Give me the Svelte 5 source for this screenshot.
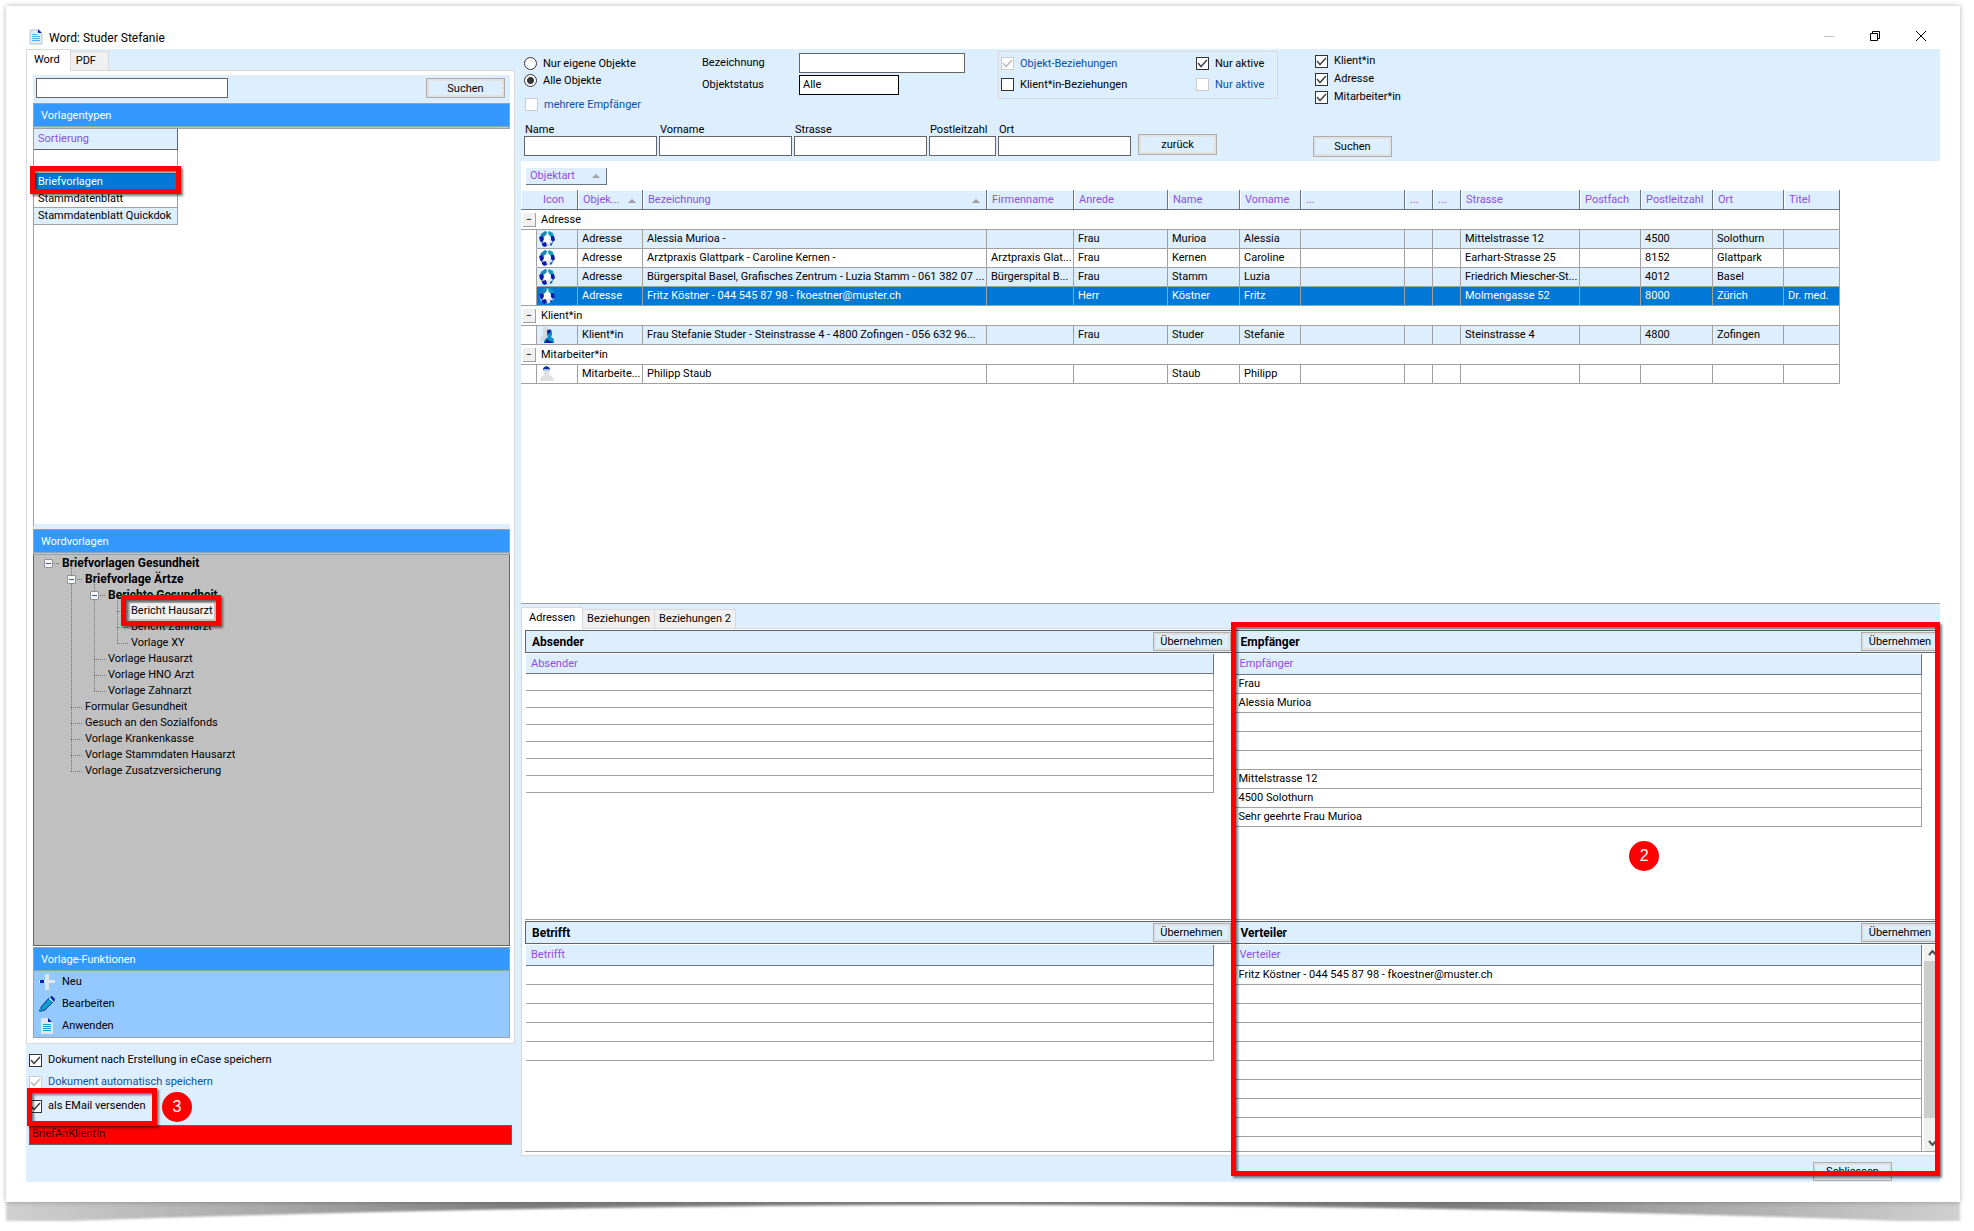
<script>
	let types = ['Briefvorlagen', 'Stammdatenblatt', 'Stammdatenblatt Quickdok'];

	let tree = {
		label: 'Briefvorlagen Gesundheit',
		children: [
			{
				label: 'Briefvorlage Ärtze',
				children: [
					{
						label: 'Berichte Gesundheit',
						children: [
							{ label: 'Bericht Hausarzt', selected: true },
							{ label: 'Bericht Zahnarzt' },
							{ label: 'Vorlage XY' }
						]
					},
					{ label: 'Vorlage Hausarzt' },
					{ label: 'Vorlage HNO Arzt' },
					{ label: 'Vorlage Zahnarzt' }
				]
			},
			{ label: 'Formular Gesundheit' },
			{ label: 'Gesuch an den Sozialfonds' },
			{ label: 'Vorlage Krankenkasse' },
			{ label: 'Vorlage Stammdaten Hausarzt' },
			{ label: 'Vorlage Zusatzversicherung' }
		]
	};

	let searchFields = [
		{ id: 'name', label: 'Name' },
		{ id: 'vorname', label: 'Vorname' },
		{ id: 'strasse', label: 'Strasse' },
		{ id: 'plz', label: 'Postleitzahl', short: true },
		{ id: 'ort', label: 'Ort' }
	];

	let columns = [
		{ label: 'Objek...', width: 65, sort: true },
		{ label: 'Bezeichnung', width: 344, sort: true },
		{ label: 'Firmenname', width: 87 },
		{ label: 'Anrede', width: 94 },
		{ label: 'Name', width: 72 },
		{ label: 'Vorname', width: 61 },
		{ label: '...', width: 104 },
		{ label: '...', width: 28 },
		{ label: '...', width: 28 },
		{ label: 'Strasse', width: 119 },
		{ label: 'Postfach', width: 61 },
		{ label: 'Postleitzahl', width: 72 },
		{ label: 'Ort', width: 71 },
		{ label: 'Titel', width: 56 }
	];

	let groups = [
		{
			name: 'Adresse',
			icon: 'globe',
			rows: [
				{ cells: ['Adresse', 'Alessia Murioa -', '', 'Frau', 'Murioa', 'Alessia', '', '', '', 'Mittelstrasse 12', '', '4500', 'Solothurn', ''] },
				{ cells: ['Adresse', 'Arztpraxis Glattpark - Caroline Kernen -', 'Arztpraxis Glat...', 'Frau', 'Kernen', 'Caroline', '', '', '', 'Earhart-Strasse 25', '', '8152', 'Glattpark', ''] },
				{ cells: ['Adresse', 'Bürgerspital Basel, Grafisches Zentrum - Luzia Stamm - 061 382 07 ...', 'Bürgerspital B...', 'Frau', 'Stamm', 'Luzia', '', '', '', 'Friedrich Miescher-St...', '', '4012', 'Basel', ''] },
				{ selected: true, cells: ['Adresse', 'Fritz Köstner - 044 545 87 98 - fkoestner@muster.ch', '', 'Herr', 'Köstner', 'Fritz', '', '', '', 'Molmengasse 52', '', '8000', 'Zürich', 'Dr. med.'] }
			]
		},
		{
			name: 'Klient*in',
			icon: 'client',
			rows: [
				{ cells: ['Klient*in', 'Frau Stefanie Studer - Steinstrasse 4 - 4800 Zofingen - 056 632 96...', '', 'Frau', 'Studer', 'Stefanie', '', '', '', 'Steinstrasse 4', '', '4800', 'Zofingen', ''] }
			]
		},
		{
			name: 'Mitarbeiter*in',
			icon: 'staff',
			plain: true,
			rows: [
				{ cells: ['Mitarbeite...', 'Philipp Staub', '', '', 'Staub', 'Philipp', '', '', '', '', '', '', '', ''] }
			]
		}
	];

	let empty = (n) => Array(n).fill('');
	let recipient = ['Frau', 'Alessia Murioa', '', '', '', 'Mittelstrasse 12', '4500 Solothurn', 'Sehr geehrte Frau Murioa'];
	let distribution = ['Fritz Köstner - 044 545 87 98 - fkoestner@muster.ch', ...empty(9)];
</script>

{#snippet docIcon()}
	<svg width="14" height="16" viewBox="0 0 14 16" aria-hidden="true">
		<path d="M1 1h8l4 4v10H1z" fill="#e3eaf2" stroke="#b9c3cf" />
		<path d="M9 0l4 4H9z" fill="#0a2aa8" />
		<path d="M3 5.500h5M3 7.500h8M3 9.500h8M3 11.500h8" stroke="#4fb2ee" />
	</svg>
{/snippet}

{#snippet rowIcon(kind)}
	<svg width="16" height="16" viewBox="0 0 16 16" aria-hidden="true">
		{#if kind === 'globe'}
			<circle cx="8" cy="8" r="7.500" fill="#dfe3e7" />
			<path d="M6 5l3-1 2 2 0 4-3 2-3-2z" fill="#fff" />
			<path d="M2 3l4-3 2 1-1 3-3 2-3 0z" fill="#1487b8" />
			<path d="M10 0l4 2 1 4-3 0-2-2-1-2z" fill="#0a9cc4" />
			<path d="M0 6l4-1 1 3-2 4-2-2z" fill="#0a1fae" />
			<path d="M12 5l3 0 1 4-2 2-2-2zM3 12l4-1 1 4-3 1-2-2z" fill="#0a1fae" />
			<path d="M11 13l3-2-1 3-2 1z" fill="#0a5ac0" />
		{:else if kind === 'client'}
			<path d="M4 2c0-3 5-3 5 0v4l2 3v5H1c0-3 1-4 3-5z" fill="#d5d8db" />
			<path d="M8 5c0-3 5-3 5 0v3l-1 2c3 1 3 3 3 6H5c0-3 1-4 4-6l-1-2z" fill="#0a94c0" />
			<path d="M8 5c0-3 4-3 4-1l-1 2-2 1zM5 16l3-4 3 2 4 2z" fill="#0a1fae" />
		{:else}
			<path d="M4 4c0-4 7-4 7 0l-1 5c3 1 5 3 5 6H1c0-3 1-5 4-6z" fill="#dfe1e3" />
			<path d="M4 4c0-5 7-5 7 0l-2-1H6z" fill="#0a2aa8" />
			<path d="M6 3h3v2H6z" fill="#7ad0ee" />
		{/if}
	</svg>
{/snippet}

{#snippet check(id, label, checked, disabled)}
	<label class="check" class:disabled for={id}>
		<input type="checkbox" {id} {checked} {disabled} />
		<span>{label}</span>
	</label>
{/snippet}

{#snippet node(item)}
	<li>
		<div class="node">
			{#if item.children}
				<button class="toggle" aria-label="Zuklappen"></button>
			{/if}
			<span class="label" class:bold={item.children} class:selected={item.selected}>
				{item.label}
				{#if item.selected}<i class="frame frame-node"></i>{/if}
			</span>
		</div>
		{#if item.children}
			<ul>
				{#each item.children as child}
					{@render node(child)}
				{/each}
			</ul>
		{/if}
	</li>
{/snippet}

{#snippet panel(title, rows, dense, scroll)}
	<section class="panel">
		<header>
			<h2>{title}</h2>
			<button class="btn small">Übernehmen</button>
		</header>
		<div class="panel-body">
			<table class="lines" class:dense>
				<thead><tr><th>{title}</th></tr></thead>
				<tbody>
					{#each rows as row}
						<tr><td>{row}</td></tr>
					{/each}
				</tbody>
			</table>
			{#if scroll}
				<div class="scrollbar">
					<svg width="9" height="6" viewBox="0 0 9 6"><path d="M1 5l3.500-4 3.500 4" fill="none" stroke="#505050" stroke-width="2" /></svg>
					<div class="thumb"></div>
					<svg width="9" height="6" viewBox="0 0 9 6"><path d="M1 1l3.500 4 3.500-4" fill="none" stroke="#505050" stroke-width="2" /></svg>
				</div>
			{/if}
		</div>
	</section>
{/snippet}

<div class="page">
	<div class="sheet">
		<div class="titlebar">
			{@render docIcon()}
			<h1>Word: Studer Stefanie</h1>
			<div class="window-buttons">
				<button aria-label="Minimieren">
					<svg width="10" height="10"><path d="M0 5.500h10" stroke="#c4c4c4" /></svg>
				</button>
				<button aria-label="Verkleinern">
					<svg width="10" height="10" fill="none" stroke="#000"><path d="M0.500 2.500h7v7h-7zM2.500 2.500v-2h7v7h-2" /></svg>
				</button>
				<button aria-label="Schliessen">
					<svg width="10" height="10"><path d="M0 0l10 10M10 0l-10 10" stroke="#000" /></svg>
				</button>
			</div>
		</div>

		<div class="window">
			<aside>
				<div class="tabs">
					<button class="tab active">Word</button>
					<button class="tab">PDF</button>
				</div>
				<div class="tab-page">
					<div class="search">
						<input type="text" aria-label="Vorlage suchen" />
						<button class="btn">Suchen</button>
					</div>
					<div class="bar double">Vorlagentypen</div>
					<div class="types">
						<table>
							<thead><tr><th>Sortierung</th></tr></thead>
							<tbody>
								<tr class="blank"><td></td></tr>
								{#each types as type, i}
									<tr class:selected={i === 0} class:alt={i === 2}>
										<td>{type}{#if i === 0}<i class="frame frame-type"></i>{/if}</td>
									</tr>
								{/each}
							</tbody>
						</table>
					</div>
					<div class="bar double">Wordvorlagen</div>
					<div class="tree">
						<ul class="root">{@render node(tree)}</ul>
					</div>
					<div class="bar">Vorlage-Funktionen</div>
					<div class="actions">
						<button>
							<svg width="16" height="16" viewBox="0 0 16 16"><path d="M6 0h4v6h6v3h-6v7H6V9H0V6h6z" fill="#dfe6ee" /><path d="M1 6h4v3H1z" fill="#0a1fae" /></svg>
							Neu
						</button>
						<button>
							<svg width="16" height="16" viewBox="0 0 16 16"><path d="M2 11l8-9 4 4-8 8-4 1z" fill="#0aa0cc" stroke="#0a2aa8" /><path d="M11 1l2-1 3 3-1 3z" fill="#0a1fae" /><path d="M10 2l4 4" stroke="#fff" /><path d="M0 13h3v3H0z" fill="#0a8fc0" /></svg>
							Bearbeiten
						</button>
						<button>
							<svg width="16" height="16" viewBox="0 0 16 16"><path d="M2 0h7l5 5v11H2z" fill="#e2e6ea" /><path d="M9 0l4 4H9z" fill="#0a1fae" /><path d="M4 6.500h8M4 8.500h8M4 10.500h8M4 12.500h8" stroke="#1aa3c8" /></svg>
							Anwenden
						</button>
					</div>
				</div>
				<div class="options">
					{@render check('opt-save', 'Dokument nach Erstellung in eCase speichern', true, false)}
					{@render check('opt-auto', 'Dokument automatisch speichern', true, true)}
					<div class="mail">
						{@render check('opt-mail', 'als EMail versenden', true, false)}
						<i class="frame frame-mail"></i>
						<b class="step step-mail">3</b>
					</div>
				</div>
				<div class="template-name">BriefAnKlientIn</div>
			</aside>

			<main>
				<div class="filters">
					<div class="criteria">
						<div class="criteria-top">
							<div class="scope">
								<label><input type="radio" name="scope" value="own" /><span>Nur eigene Objekte</span></label>
								<label><input type="radio" name="scope" value="all" checked /><span>Alle Objekte</span></label>
								{@render check('multi', 'mehrere Empfänger', false, true)}
							</div>
							<div class="status">
								<label for="bez">Bezeichnung</label>
								<input id="bez" type="text" />
								<label for="stat">Objektstatus</label>
								<select id="stat"><option>Alle</option></select>
							</div>
							<div class="relations">
								{@render check('rel-obj', 'Objekt-Beziehungen', true, true)}
								{@render check('act-obj', 'Nur aktive', true, false)}
								{@render check('rel-cli', 'Klient*in-Beziehungen', false, false)}
								{@render check('act-cli', 'Nur aktive', false, true)}
							</div>
						</div>
						<div class="fields">
							{#each searchFields as field}
								<div class="field" class:short={field.short}>
									<label for={field.id}>{field.label}</label>
									<input id={field.id} type="text" />
								</div>
							{/each}
							<button class="btn">zurück</button>
						</div>
					</div>
					<div class="kinds">
						{@render check('kind-cli', 'Klient*in', true, false)}
						{@render check('kind-adr', 'Adresse', true, false)}
						{@render check('kind-mit', 'Mitarbeiter*in', true, false)}
						<button class="btn">Suchen</button>
					</div>
				</div>

				<div class="results">
					<button class="group-by">Objektart <i class="sort"></i></button>
					<table class="objects">
						<colgroup>
							<col style="width: 16px" />
							<col style="width: 41px" />
							{#each columns as column}
								<col style="width: {column.width}px" />
							{/each}
						</colgroup>
						<thead>
							<tr>
								<th colspan="2" class="icon-head">Icon</th>
								{#each columns as column}
									<th>{column.label}{#if column.sort}<i class="sort"></i>{/if}</th>
								{/each}
							</tr>
						</thead>
						{#each groups as group}
							<tbody class:plain={group.plain}>
								<tr class="group">
									<td colspan="16"><button aria-label="Gruppe zuklappen">−</button>{group.name}</td>
								</tr>
								{#each group.rows as row}
									<tr class:selected={row.selected}>
										<td class="gutter"></td>
										<td class="icon">{@render rowIcon(group.icon)}</td>
										{#each row.cells as cell}
											<td>{cell}</td>
										{/each}
									</tr>
								{/each}
							</tbody>
						{/each}
					</table>
				</div>

				<div class="tabs lower">
					<button class="tab active">Adressen</button>
					<button class="tab">Beziehungen</button>
					<button class="tab">Beziehungen 2</button>
				</div>
				<div class="letter">
					<div class="letter-col">
						{@render panel('Absender', empty(7), true, false)}
						{@render panel('Betrifft', empty(5), false, false)}
					</div>
					<div class="letter-col">
						{@render panel('Empfänger', recipient, false, false)}
						{@render panel('Verteiler', distribution, false, true)}
						<i class="frame frame-letter"></i>
						<b class="step step-letter">2</b>
					</div>
				</div>
				<footer><button class="btn">Schliessen</button></footer>
			</main>
		</div>
	</div>

	<!-- curled paper shadow below the sheet -->
	<svg class="curl" viewBox="0 0 1974 29" preserveAspectRatio="none" aria-hidden="true">
		<defs>
			<linearGradient id="curl-fill">
				<stop offset="0" stop-color="#d0d0d0" />
				<stop offset="0.150" stop-color="#a4a4a4" />
				<stop offset="0.260" stop-color="#808080" />
				<stop offset="0.500" stop-color="#8e8e8e" />
				<stop offset="0.740" stop-color="#808080" />
				<stop offset="0.850" stop-color="#a4a4a4" />
				<stop offset="1" stop-color="#d0d0d0" />
			</linearGradient>
			<filter id="curl-blur" x="-1%" y="-40%" width="102%" height="180%"><feGaussianBlur stdDeviation="1" /></filter>
		</defs>
		<path d="M6 -8H1960V19H1900Q1450 3 987 3T70 19H6z" fill="url(#curl-fill)" filter="url(#curl-blur)" />
	</svg>
</div>

<style>
	:global(body) {
		margin: 0;
		background: #fff;
	}

	.page {
		display: flex;
		flex-direction: column;
		min-height: 100vh;
		box-sizing: border-box;
		font-family: Roboto, 'Liberation Sans', Arial, sans-serif;
		font-size: 11px;
		line-height: 16px;
		color: #000;
	}

	.page *,
	.page *::before,
	.page *::after {
		box-sizing: border-box;
	}

	button,
	input,
	select {
		font: inherit;
		color: inherit;
		margin: 0;
		padding: 0;
		border-radius: 0;
	}

	button {
		border: 0;
		background: none;
	}

	table {
		border-collapse: separate;
		border-spacing: 0;
	}

	th,
	td {
		padding: 0;
		text-align: left;
		font-weight: normal;
		white-space: nowrap;
		overflow: hidden;
	}

	.sheet {
		flex: 1;
		display: flex;
		flex-direction: column;
		margin: 6px 14px 0 6px;
		padding: 0 20px 20px;
		background: #fff;
		box-shadow: 0 0 5px rgba(0, 0, 0, 0.3);
		position: relative;
		z-index: 1;
	}

	.curl {
		width: 100%;
		height: 29px;
		display: block;
	}

	.titlebar {
		display: flex;
		align-items: flex-start;
		gap: 6px;
		height: 43px;
		padding: 18px 14px 0 3px;
	}

	.titlebar svg {
		margin-top: 5px;
	}

	.titlebar h1 {
		margin: 6px 0 0;
		font-size: 12px;
		line-height: 16px;
		font-weight: normal;
	}

	.window-buttons {
		display: flex;
		gap: 36px;
		margin-left: auto;
	}

	.window-buttons button {
		width: 10px;
	}

	.window-buttons svg {
		display: block;
		margin-top: 7px;
	}

	.window {
		flex: 1;
		display: flex;
		background: #ddeeff;
	}

	/* shared controls */
	input[type='text'],
	select {
		height: 20px;
		border: 1px solid #646464;
		background: #fff;
		padding: 0 3px;
	}

	.btn {
		width: 79px;
		height: 21px;
		border: 1px solid #adadad;
		background: #ddeeff;
		box-shadow: inset 0 0 0 2px #e1e1e1;
		line-height: 17px;
		text-align: center;
	}

	.btn.small {
		width: 78px;
		height: 19px;
	}

	.check,
	.scope label {
		display: flex;
		align-items: center;
		gap: 6px;
		white-space: nowrap;
	}

	.check.disabled {
		color: #0a50a8;
	}

	input[type='checkbox'],
	input[type='radio'] {
		appearance: none;
		flex: none;
		width: 13px;
		height: 13px;
		border: 1px solid #333;
		background: #fff;
	}

	input[type='checkbox']:checked {
		background: #fff url("data:image/svg+xml,%3Csvg xmlns='http://www.w3.org/2000/svg' viewBox='0 0 11 11'%3E%3Cpath d='M1 5l3 3.500 6-6.500' fill='none' stroke='%23444' stroke-width='1.500'/%3E%3C/svg%3E");
	}

	input[type='checkbox']:disabled {
		border-color: #ccc;
	}

	input[type='checkbox']:checked:disabled {
		background-image: url("data:image/svg+xml,%3Csvg xmlns='http://www.w3.org/2000/svg' viewBox='0 0 11 11'%3E%3Cpath d='M1 5l3 3.500 6-6.500' fill='none' stroke='%23bbb' stroke-width='1.500'/%3E%3C/svg%3E");
	}

	input[type='radio'] {
		border-radius: 50%;
	}

	input[type='radio']:checked {
		background: radial-gradient(circle, #333 0 3px, #fff 4px);
	}

	.sort {
		display: inline-block;
		border: 4px solid transparent;
		border-top: 0;
		border-bottom-color: #a0a0a0;
	}

	.tabs {
		display: flex;
		align-items: flex-end;
		height: 21px;
	}

	.tab {
		height: 19px;
		padding: 0 12px 0 5px;
		border: 1px solid #d9d9d9;
		border-left: 0;
		border-bottom: 0;
		background: #f0f0f0;
		white-space: nowrap;
	}

	.tab.active {
		height: 22px;
		margin-bottom: -1px;
		padding: 0 10px 2px 7px;
		border-left: 1px solid #d9d9d9;
		background: #fff;
		position: relative;
	}

	/* markers */
	.frame {
		position: absolute;
		border: 5px solid #f00;
		filter: drop-shadow(2px 2px 1px rgba(0, 0, 0, 0.5));
		pointer-events: none;
		z-index: 2;
	}

	.step {
		position: absolute;
		width: 30px;
		height: 30px;
		border-radius: 50%;
		background: #f00;
		color: #fff;
		font: 16px/30px 'Liberation Sans', Arial, sans-serif;
		text-align: center;
		z-index: 2;
	}

	/* left column */
	aside {
		flex: none;
		width: 495px;
		display: flex;
		flex-direction: column;
		padding-bottom: 37px;
	}

	.tab-page {
		flex: 1;
		display: flex;
		flex-direction: column;
		margin-right: 6px;
		padding: 4px 4px 5px 6px;
		border: 1px solid #d9d9d9;
		background: #fff;
	}

	.search {
		display: flex;
		justify-content: space-between;
		padding: 3px 5px 5px 3px;
		background: #ddeeff;
	}

	.search input {
		width: 192px;
	}

	.search .btn {
		height: 20px;
	}

	.bar {
		height: 24px;
		padding-left: 7px;
		border: 1px solid #a0a0a0;
		background: #3399ff;
		color: #fff;
		line-height: 23px;
	}

	.bar.double {
		height: 26px;
		border-bottom: 0;
		box-shadow: inset 0 -1px #a0a0a0, inset 0 -2px #99ccff, inset 0 -3px #a0a0a0;
	}

	.types {
		height: 400px;
		border-left: 1px solid #a0a0a0;
		border-bottom: 5px solid #ddeeff;
	}

	.types table {
		width: 144px;
		table-layout: fixed;
	}

	.types th {
		height: 21px;
		padding-left: 4px;
		border-right: 1px solid #646464;
		border-bottom: 1px solid #646464;
		background: #ddeeff;
		color: #8f4fe0;
	}

	.types td {
		height: 17px;
		padding-left: 4px;
		border-right: 1px solid #a0a0a0;
		border-bottom: 1px solid #a0a0a0;
		line-height: 16px;
	}

	.types .blank td {
		height: 24px;
		border-bottom-color: #646464;
	}

	.types .alt td {
		background: #ddeeff;
	}

	.types .selected td {
		position: relative;
		overflow: visible;
		background: #0078d7;
		color: #fff;
	}

	.frame-type {
		inset: -8px -4px -4px -4px;
	}

	.tree {
		flex: 1;
		margin-bottom: 1px;
		padding-left: 9px;
		border: 1px solid #646464;
		border-top: 0;
		background: #c0c0c0;
	}

	.tree ul {
		margin: 0;
		padding: 0;
		list-style: none;
	}

	.tree ul ul {
		margin-left: 23px;
	}

	.tree li {
		position: relative;
	}

	.tree li::before {
		content: '';
		position: absolute;
		left: 5px;
		top: -5px;
		bottom: 0;
		border-left: 1px dotted #707070;
	}

	.tree li:last-child::before {
		bottom: auto;
		height: 13px;
	}

	.tree .root > li::before {
		display: none;
	}

	.node {
		display: flex;
		align-items: center;
		height: 16px;
		padding-left: 18px;
		position: relative;
	}

	.node::before {
		content: '';
		position: absolute;
		left: 5px;
		top: 8px;
		width: 11px;
		border-top: 1px dotted #707070;
	}

	.toggle {
		position: absolute;
		left: 1px;
		top: 4px;
		width: 9px;
		height: 9px;
		border: 1px solid #919191;
		border-radius: 1px;
		background: linear-gradient(#3b5a9a, #3b5a9a) center / 5px 1px no-repeat, #f6f6f6;
	}

	.label {
		padding: 0 1px;
		white-space: nowrap;
	}

	.bold {
		font-size: 12px;
		font-weight: bold;
	}

	.label.selected {
		position: relative;
		padding: 0 1px;
		background: #f0f0f0;
	}

	.frame-node {
		inset: -8px -7px -7px -9px;
	}

	.actions {
		display: flex;
		flex-direction: column;
		padding-left: 5px;
		border: 1px solid #a0a0a0;
		border-top: 0;
		background: #94c9ff;
	}

	.actions button {
		display: flex;
		align-items: center;
		gap: 7px;
		height: 22px;
	}

	.options {
		padding: 5px 0 6px 3px;
	}

	.options .check {
		height: 22px;
	}

	.mail {
		position: relative;
		display: flex;
		align-items: center;
		height: 26px;
	}

	.frame-mail {
		left: -2px;
		top: -5px;
		width: 130px;
		height: 38px;
	}

	.step-mail {
		left: 133px;
		top: -1px;
	}

	.template-name {
		height: 20px;
		margin: 0 9px 0 3px;
		padding-left: 2px;
		border: 1px solid #646464;
		background: #f00;
		color: #300000;
	}

	/* right column */
	main {
		flex: 1;
		min-width: 0;
		display: flex;
		flex-direction: column;
	}

	.filters {
		display: flex;
		align-items: flex-start;
		gap: 35px;
		padding: 2px 0 4px 3px;
	}

	.criteria-top {
		display: flex;
		height: 72px;
		align-items: flex-start;
	}

	.scope {
		width: 178px;
		padding-top: 4px;
	}

	.scope label {
		height: 17px;
	}

	.scope .check {
		margin: 7px 0 0 1px;
	}

	.status {
		display: grid;
		grid-template-columns: 97px 166px;
		gap: 2px 0;
		align-items: center;
		width: 296px;
		padding-top: 2px;
	}

	.status select {
		appearance: none;
		width: 100px;
		border-color: #000;
	}

	.relations {
		display: grid;
		grid-template-columns: 195px auto;
		align-content: start;
		gap: 4px 0;
		width: 280px;
		height: 48px;
		padding: 3px 2px;
		border: 1px solid #d9d9d9;
	}

	.relations .check {
		height: 17px;
	}

	.fields {
		display: flex;
		align-items: flex-end;
		gap: 2px;
	}

	.field {
		width: 133px;
	}

	.field.short {
		width: 67px;
	}

	.field label,
	.field input {
		display: block;
		width: 100%;
	}

	.field label {
		line-height: 13px;
		padding-left: 1px;
	}

	.fields .btn {
		margin: 0 0 1px 5px;
	}

	.kinds {
		padding-top: 1px;
	}

	.kinds .check {
		height: 18px;
		margin-left: 2px;
	}

	.kinds .btn {
		margin-top: 30px;
	}

	.results {
		flex: 1;
		padding-top: 7px;
		border-bottom: 1px solid #a0a0a0;
		background: #fff;
	}

	.group-by {
		display: flex;
		align-items: center;
		justify-content: space-between;
		width: 81px;
		height: 17px;
		margin: 0 0 5px 5px;
		padding: 0 6px 0 4px;
		border-right: 1px solid #6b7480;
		border-bottom: 1px solid #6b7480;
		background: #ddeeff;
		color: #8f4fe0;
	}

	.objects {
		table-layout: fixed;
		width: 1319px;
	}

	.objects th {
		height: 20px;
		padding-left: 5px;
		border-right: 1px solid #6b7480;
		border-bottom: 1px solid #6b7480;
		background: #ddeeff;
		box-shadow: inset 1px 1px #fff;
		color: #8f4fe0;
		position: relative;
	}

	.objects .icon-head {
		padding-left: 22px;
	}

	.objects th .sort {
		position: absolute;
		right: 6px;
		top: 9px;
	}

	.objects td {
		height: 19px;
		padding-left: 4px;
		border-right: 1px solid #a0a0a0;
		border-bottom: 1px solid #a0a0a0;
		background: #ddeeff;
		line-height: 18px;
	}

	.objects tr:nth-child(odd) td,
	.objects .plain td,
	.objects td.gutter {
		background: #fff;
	}

	.objects td.gutter {
		border-bottom-color: transparent;
	}

	.objects tr:last-child td.gutter {
		border-bottom-color: #a0a0a0;
	}

	.objects td.icon {
		padding-left: 2px;
	}

	.icon svg {
		display: block;
	}

	.objects .selected td:not(.gutter) {
		background: #0078d7;
		color: #fff;
	}

	.objects .group td {
		height: 20px;
		padding-left: 2px;
	}

	.group button {
		width: 13px;
		height: 14px;
		margin-right: 5px;
		border-right: 1px solid #a0a0a0;
		border-bottom: 1px solid #a0a0a0;
		background: #f0f0f0;
		line-height: 12px;
		text-align: center;
	}

	.tabs.lower {
		height: 24px;
	}

	.lower .tab {
		padding: 0 4px;
	}

	.lower .tab.active {
		padding: 0 7px 2px;
	}

	.letter {
		display: grid;
		grid-template-columns: 1fr 1fr;
		gap: 2px;
		padding: 1px 0 2px 3px;
		border: 1px solid #d9d9d9;
		border-right: 0;
		background: #fff;
	}

	.letter-col {
		display: grid;
		grid-template-rows: 291px 232px;
		position: relative;
		min-width: 0;
	}

	.panel {
		display: flex;
		flex-direction: column;
		min-height: 0;
		padding-bottom: 1px;
	}

	.panel header {
		display: flex;
		align-items: center;
		justify-content: space-between;
		height: 23px;
		padding: 0 1px 0 6px;
		border: 1px solid #646464;
		border-right: 0;
		background: #ddeeff;
	}

	.panel h2 {
		margin: 0;
		font-size: 12px;
		line-height: 16px;
	}

	.panel-body {
		flex: 1;
		display: flex;
		min-height: 0;
		overflow: hidden;
		padding: 1px 0 0 1px;
		border-bottom: 1px solid #a0a0a0;
	}

	.lines {
		flex: 1;
		margin-right: 18px;
		align-self: flex-start;
	}

	.lines th {
		height: 21px;
		padding-left: 5px;
		border-right: 1px solid #6b7480;
		border-bottom: 1px solid #6b7480;
		background: #ddeeff;
		color: #8f4fe0;
	}

	.lines td {
		height: 19px;
		padding-left: 4px;
		border-right: 1px solid #a0a0a0;
		border-bottom: 1px solid #a0a0a0;
		line-height: 18px;
	}

	.lines.dense th {
		height: 20px;
	}

	.lines.dense td {
		height: 17px;
	}

	.lines:not(:only-child) {
		margin-right: 2px;
	}

	.scrollbar {
		display: flex;
		flex-direction: column;
		align-items: center;
		gap: 5px;
		width: 16px;
		padding: 5px 0;
		background: #f0f0f0;
	}

	.thumb {
		flex: 1;
		width: 100%;
		margin-bottom: 17px;
		background: #cdcdcd;
	}

	.frame-letter {
		inset: -8px 0 -23px -3px;
	}

	.step-letter {
		left: 56%;
		top: 211px;
	}

	footer {
		display: flex;
		justify-content: flex-end;
		padding: 6px 48px 0 0;
		height: 26px;
	}

	footer .btn {
		height: 19px;
	}
</style>
